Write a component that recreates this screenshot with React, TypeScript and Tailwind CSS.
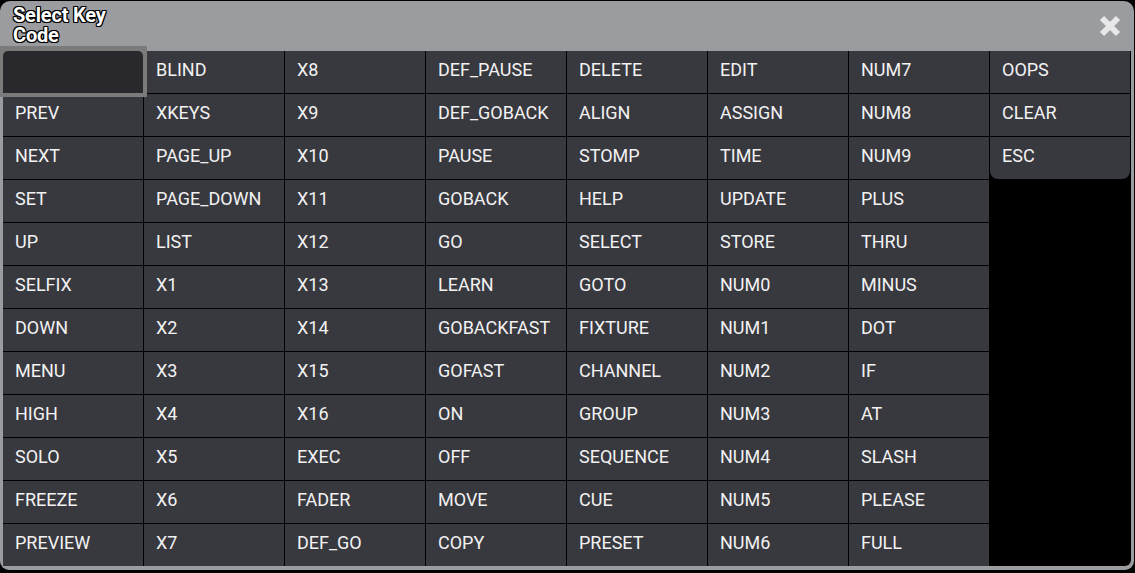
import React from "react";

const columns: string[][] = [
  ["", "PREV", "NEXT", "SET", "UP", "SELFIX", "DOWN", "MENU", "HIGH", "SOLO", "FREEZE", "PREVIEW"],
  ["BLIND", "XKEYS", "PAGE_UP", "PAGE_DOWN", "LIST", "X1", "X2", "X3", "X4", "X5", "X6", "X7"],
  ["X8", "X9", "X10", "X11", "X12", "X13", "X14", "X15", "X16", "EXEC", "FADER", "DEF_GO"],
  ["DEF_PAUSE", "DEF_GOBACK", "PAUSE", "GOBACK", "GO", "LEARN", "GOBACKFAST", "GOFAST", "ON", "OFF", "MOVE", "COPY"],
  ["DELETE", "ALIGN", "STOMP", "HELP", "SELECT", "GOTO", "FIXTURE", "CHANNEL", "GROUP", "SEQUENCE", "CUE", "PRESET"],
  ["EDIT", "ASSIGN", "TIME", "UPDATE", "STORE", "NUM0", "NUM1", "NUM2", "NUM3", "NUM4", "NUM5", "NUM6"],
  ["NUM7", "NUM8", "NUM9", "PLUS", "THRU", "MINUS", "DOT", "IF", "AT", "SLASH", "PLEASE", "FULL"],
  ["OOPS", "CLEAR", "ESC"],
];

const KeyCell = ({ label, last }: { label: string; last?: boolean }) => (
  <div
    className={
      "flex items-center pl-[12px] pb-[5px] bg-[#38383f] text-[18px] text-[#f2f2f2] " +
      (last ? "rounded-b-[8px]" : "")
    }
  >
    {label}
  </div>
);

const SelectedCell = () => (
  <div className="relative z-10 -mx-[4px] -mt-[5px] -mb-[4px] bg-[#7b7b7b] px-[4px] pt-[5px] pb-[4px]">
    <div className="h-full rounded-t-[5px] bg-[#29282d]" />
  </div>
);

export default function App() {
  return (
    <div className="h-[573px] w-[1135px] bg-black pt-px font-['Roboto',sans-serif]">
      <div className="flex h-[569px] w-[1134px] flex-col rounded-t-[10px] rounded-b-[9px] bg-[#9b9ca0] px-[3px] pb-[3px]">
        <div className="flex h-[50px] items-start justify-between">
          <div className="pl-[10px] pt-[4px] text-[20px] font-bold leading-[20px] tracking-[-0.2px] text-white [text-shadow:-1px_-1px_0_#000,1px_-1px_0_#000,-1px_1px_0_#000,1px_1px_0_#000,0_1px_0_#000,0_-1px_0_#000,1px_0_0_#000,-1px_0_0_#000]">
            <div>Select Key</div>
            <div>Code</div>
          </div>
          <svg width="22" height="22" viewBox="0 0 22 22" className="mr-[10px] mt-[14px]">
            <path d="M3 3 L19 19 M19 3 L3 19" stroke="#e8e8e8" strokeWidth="6" strokeLinecap="butt" />
          </svg>
        </div>
        <div className="grid grid-flow-col grid-cols-[repeat(8,140px)] grid-rows-[repeat(12,42px)] gap-px rounded-b-[6px] bg-black">
          {columns.map((col, ci) =>
            col.map((label, ri) =>
              ci === 0 && ri === 0 ? (
                <SelectedCell key="sel" />
              ) : (
                <KeyCell key={ci + "-" + ri} label={label} last={ci === 7 && ri === col.length - 1} />
              )
            )
          )}
        </div>
      </div>
    </div>
  );
}
